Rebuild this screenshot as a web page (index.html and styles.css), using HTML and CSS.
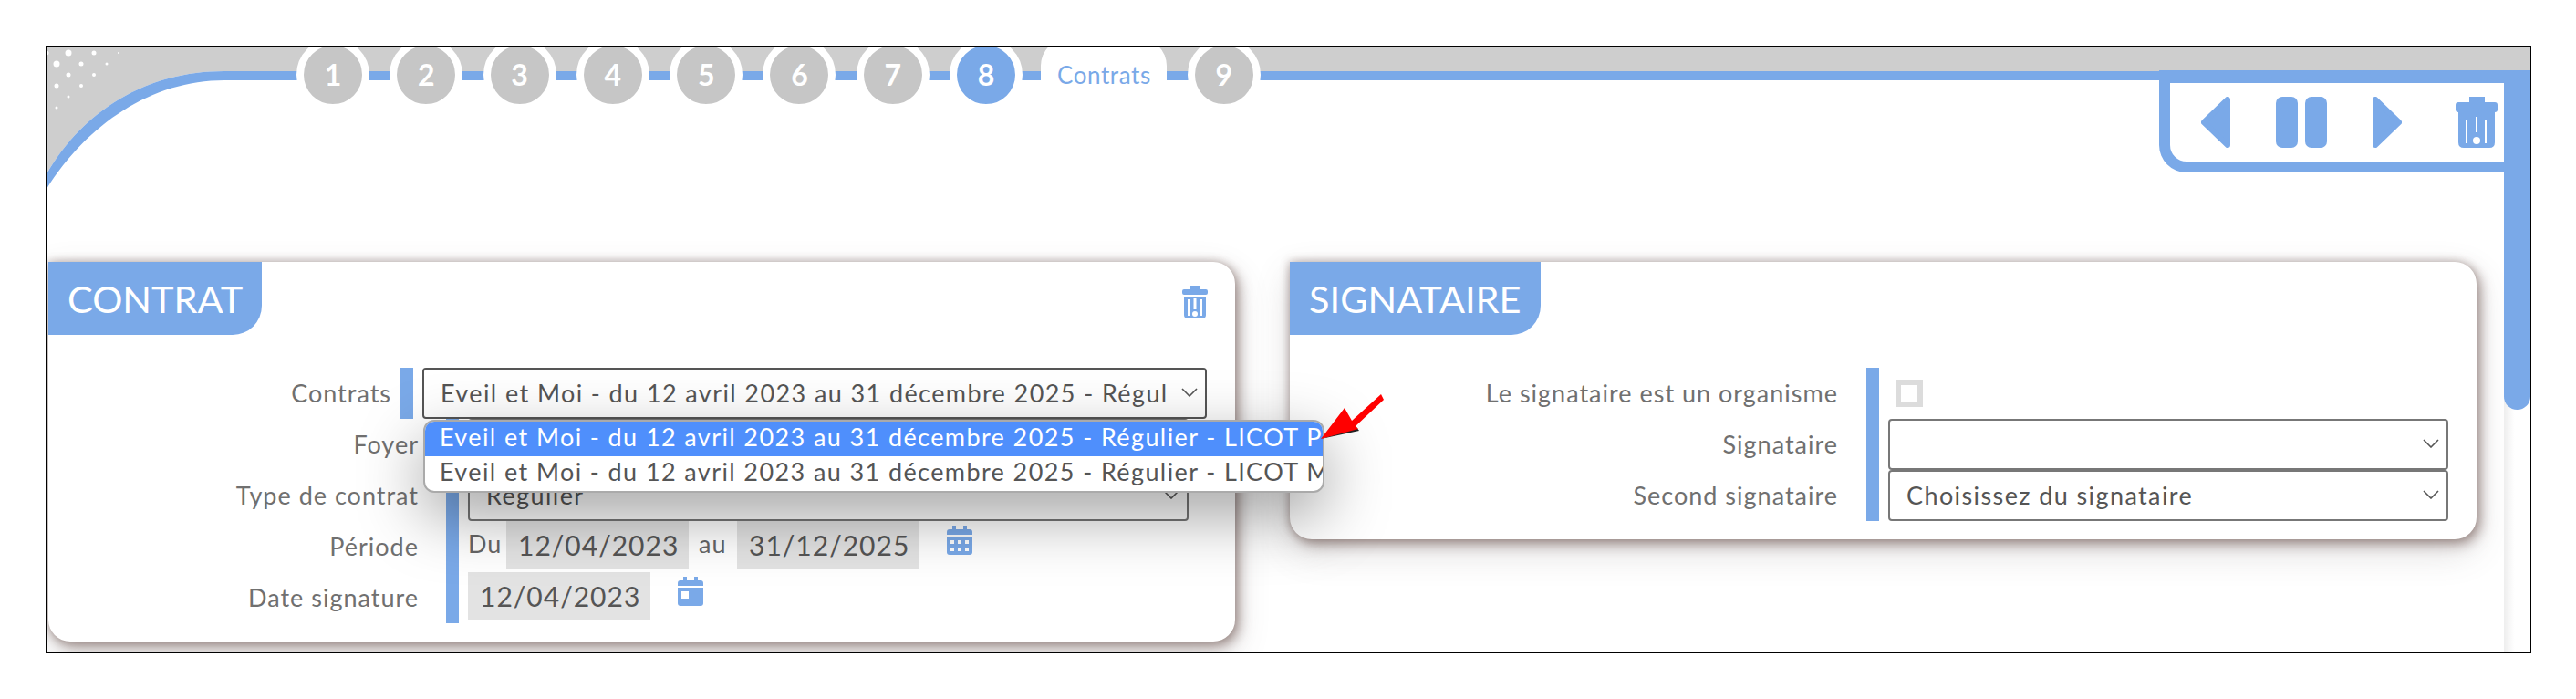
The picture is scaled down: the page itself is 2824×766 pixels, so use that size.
FILE: index.html
```html
<!DOCTYPE html>
<html lang="fr">
<head>
    <meta charset="UTF-8">
    <title>Contrats</title>
    <link rel="stylesheet" href="styles.css">
</head>
<body>
    <div class="frame">
        <div class="topbar">
            <svg class="corner" width="2726" height="170" viewBox="0 0 2726 170">
                <path fill="#cecece" d="M0 0H2726V27H195C110 27 40 70 0 140Z"/>
                <path fill="#7aa9e8" d="M0 140C40 70 110 27 195 27H2726V37H195C115 37 45 85 0 156Z"/>
                <g fill="#fff">
                    <circle cx="0" cy="7" r="2.5"/><circle cx="24" cy="7" r="3.5"/><circle cx="52" cy="7" r="2.5"/><circle cx="79" cy="7" r="1"/>
                    <circle cx="11" cy="19" r="3.5"/><circle cx="38" cy="19" r="2.5"/><circle cx="66" cy="19" r="1.5"/>
                    <circle cx="24" cy="31" r="2.5"/><circle cx="52" cy="31" r="2"/>
                    <circle cx="11" cy="43" r="2.5"/><circle cx="38" cy="43" r="2"/>
                    <circle cx="24" cy="55" r="1.5"/><circle cx="11" cy="67" r="1.5"/>
                </g>
            </svg>
            <div class="steps">
                <div class="step">1</div>
                <div class="step">2</div>
                <div class="step">3</div>
                <div class="step">4</div>
                <div class="step">5</div>
                <div class="step">6</div>
                <div class="step">7</div>
                <div class="step active">8</div>
                <div class="step-title">Contrats</div>
                <div class="step">9</div>
            </div>
            <div class="tools">
                <svg width="32" height="56" viewBox="0 0 32 56"><path fill="#7aa9e8" stroke="#7aa9e8" stroke-width="6" stroke-linejoin="round" d="M29 3V53L3 28Z"/></svg>
                <div class="pause"><span></span><span></span></div>
                <svg width="32" height="56" viewBox="0 0 32 56"><path fill="#7aa9e8" stroke="#7aa9e8" stroke-width="6" stroke-linejoin="round" d="M3 3V53L29 28Z"/></svg>
                <svg class="tool-trash" width="46" height="56" viewBox="0 0 46 56">
                    <path fill="#7aa9e8" d="M15 0H32V6H43Q46 6 46 9V14Q46 17 43 17V50Q43 56 37 56H9Q3 56 3 50V17Q0 17 0 14V9Q0 6 3 6H15Z"/>
                    <path fill="#fff" d="M11 25H13V51H11ZM32 25H34V51H32ZM22 22H24V39H22Z"/>
                    <circle cx="23" cy="48" r="4" fill="#fff"/>
                </svg>
            </div>
        </div>

        <div class="cards">
            <section class="card card-contrat">
                <h2 class="card-title">CONTRAT</h2>
                <svg class="card-trash" width="28" height="36" viewBox="0 0 28 36">
                    <path fill="#7aa9e8" d="M9 0H20V4H26Q28 4 28 6V8Q28 10 26 10H2Q0 10 0 8V6Q0 4 2 4H9Z"/>
                    <path fill="#7aa9e8" d="M2 12H26V32Q26 36 22 36H6Q2 36 2 32Z"/>
                    <path fill="#fff" d="M6 15H9V33H6ZM19 15H22V33H19ZM12.5 14H15.5V26H12.5Z"/>
                    <circle cx="14" cy="31" r="3" fill="#fff"/>
                </svg>
                <div class="form">
                    <div class="row row-first">
                        <div class="label">Contrats</div>
                        <div class="field">
                            <div class="select dark">
                                <span class="value">Eveil et Moi - du 12 avril 2023 au 31 décembre 2025 - Régul</span>
                                <svg class="chevron" width="18" height="10" viewBox="0 0 18 10"><path fill="none" stroke="#555" stroke-width="1.6" d="M1 1L9 9L17 1"/></svg>
                            </div>
                            <div class="dropdown">
                                <div class="option selected">Eveil et Moi - du 12 avril 2023 au 31 décembre 2025 - Régulier - LICOT P</div>
                                <div class="option">Eveil et Moi - du 12 avril 2023 au 31 décembre 2025 - Régulier - LICOT M</div>
                            </div>
                        </div>
                    </div>
                    <div class="row">
                        <div class="label">Foyer</div>
                        <div class="field"><div class="select"></div></div>
                    </div>
                    <div class="row">
                        <div class="label">Type de contrat</div>
                        <div class="field">
                            <div class="select">
                                <span class="value">Régulier</span>
                                <svg class="chevron" width="18" height="10" viewBox="0 0 18 10"><path fill="none" stroke="#555" stroke-width="1.6" d="M1 1L9 9L17 1"/></svg>
                            </div>
                        </div>
                    </div>
                    <div class="row">
                        <div class="label">Période</div>
                        <div class="field dates">
                            <span class="word">Du</span>
                            <div class="date">12/04/2023</div>
                            <span class="word">au</span>
                            <div class="date">31/12/2025</div>
                            <svg class="calendar" width="28" height="32" viewBox="0 0 28 32">
                                <path fill="#7aa9e8" d="M6 0H10V4H18V0H22V4H25Q28 4 28 7V10H0V7Q0 4 3 4H6Z"/>
                                <path fill="#7aa9e8" d="M0 12H28V29Q28 32 25 32H3Q0 32 0 29Z"/>
                                <path fill="#fff" d="M4 16H8V20H4ZM12 16H16V20H12ZM20 16H24V20H20ZM4 24H8V28H4ZM12 24H16V28H12ZM20 24H24V28H20Z"/>
                            </svg>
                        </div>
                    </div>
                    <div class="row">
                        <div class="label">Date signature</div>
                        <div class="field dates">
                            <div class="date">12/04/2023</div>
                            <svg class="calendar" width="28" height="32" viewBox="0 0 28 32">
                                <path fill="#7aa9e8" d="M6 0H10V4H18V0H22V4H25Q28 4 28 7V10H0V7Q0 4 3 4H6Z"/>
                                <path fill="#7aa9e8" d="M0 12H28V29Q28 32 25 32H3Q0 32 0 29Z"/>
                                <path fill="#fff" d="M4 16H12V24H4Z"/>
                            </svg>
                        </div>
                    </div>
                </div>
            </section>

            <section class="card card-signataire">
                <h2 class="card-title">SIGNATAIRE</h2>
                <div class="form">
                    <div class="row">
                        <div class="label">Le signataire est un organisme</div>
                        <div class="field"><span class="checkbox"></span></div>
                    </div>
                    <div class="row">
                        <div class="label">Signataire</div>
                        <div class="field">
                            <div class="select">
                                <svg class="chevron" width="18" height="10" viewBox="0 0 18 10"><path fill="none" stroke="#555" stroke-width="1.6" d="M1 1L9 9L17 1"/></svg>
                            </div>
                        </div>
                    </div>
                    <div class="row">
                        <div class="label">Second signataire</div>
                        <div class="field">
                            <div class="select">
                                <span class="value">Choisissez du signataire</span>
                                <svg class="chevron" width="18" height="10" viewBox="0 0 18 10"><path fill="none" stroke="#555" stroke-width="1.6" d="M1 1L9 9L17 1"/></svg>
                            </div>
                        </div>
                    </div>
                </div>
            </section>
        </div>

        <div class="scrollbar"><div class="thumb"></div></div>

        <svg class="arrow" width="80" height="60" viewBox="0 0 80 60">
            <path fill="#222" d="M8 56L50 47L47 43Z"/>
            <path fill="#f00" d="M8 56L34 22L42 36L74 7L77 13L46 42L49 45Z"/>
        </svg>
    </div>
</body>
</html>
```

FILE: styles.css
```css
body {
    margin: 0;
    padding: 50px;
    background: white;
    font-family: Lato, sans-serif;
    color: #666;
}
.frame {
    position: relative;
    width: 2723px;
    height: 664px;
    border: 1px solid black;
    overflow: hidden;
    background: white;
}
.topbar {
    position: relative;
    display: flex;
    align-items: flex-start;
    justify-content: space-between;
    height: 236px;
}
.corner {
    position: absolute;
    top: 0;
    left: 0;
}
.steps {
    position: relative;
    display: flex;
    gap: 22.3px;
    margin-left: 274px;
    margin-top: -9px;
}
.step {
    box-sizing: border-box;
    width: 80px;
    height: 80px;
    border: 8px solid white;
    border-radius: 50%;
    background: #c6c6c6;
    color: white;
    font-size: 32px;
    font-weight: 700;
    line-height: 64px;
    text-align: center;
}
.step.active {
    background: #7aa9e8;
}
.step-title {
    width: 138px;
    height: 48px;
    margin-left: -2px;
    padding-top: 24px;
    border-radius: 30px 30px 0 0;
    background: white;
    color: #7aa9e8;
    font-size: 26px;
    letter-spacing: 0.6px;
    text-align: center;
}
.tools {
    position: relative;
    box-sizing: border-box;
    display: flex;
    align-items: center;
    width: 407px;
    height: 112px;
    margin-top: 26px;
    padding-left: 34px;
    border: 12px solid #7aa9e8;
    border-right-width: 11px;
    border-top-width: 14px;
    border-radius: 0 0 0 30px;
    background: white;
}
.pause {
    display: flex;
    gap: 8px;
    margin-left: 50px;
    margin-right: 50px;
}
.pause span {
    width: 24px;
    height: 56px;
    border-radius: 7px;
    background: #7aa9e8;
}
.tool-trash {
    margin-left: 59px;
}
.cards {
    position: relative;
    display: flex;
    align-items: flex-start;
    gap: 60px;
    padding-left: 2px;
}
.card {
    position: relative;
    border-radius: 0 24px 24px 24px;
    background: white;
    box-shadow: 4px 5px 14px rgba(110, 85, 80, 0.6), -1px -1px 10px rgba(110, 85, 80, 0.3), 0 14px 38px rgba(90, 80, 80, 0.2);
}
.card-contrat {
    z-index: 2;
    width: 1301px;
    height: 416px;
}
.card-signataire {
    width: 1301px;
    height: 304px;
}
.card-title {
    display: flex;
    align-items: center;
    width: fit-content;
    height: 80px;
    margin: 0;
    padding: 0 21px;
    border-radius: 0 0 32px 0;
    background: #7aa9e8;
    color: white;
    font-size: 41.5px;
    font-weight: 400;
}
.card-trash {
    position: absolute;
    top: 26px;
    right: 30px;
}
.form {
    margin-top: 36px;
}
.row {
    display: flex;
    align-items: stretch;
    height: 56px;
    font-size: 27px;
    letter-spacing: 1.4px;
}
.label {
    width: 406px;
    margin-right: 30px;
    color: #707070;
    letter-spacing: 1px;
    line-height: 55px;
    text-align: right;
}
.row-first .label {
    width: 376px;
    margin-right: 10px;
}
.field {
    position: relative;
    display: flex;
    align-items: center;
    width: 790px;
    padding-left: 10px;
    border-left: 14px solid #7aa9e8;
}
.row-first .field {
    width: 860px;
}
.select {
    box-sizing: border-box;
    display: flex;
    align-items: center;
    justify-content: space-between;
    width: 100%;
    height: 56px;
    padding: 0 8px 2px 18px;
    border: 2px solid #777;
    border-radius: 4px;
    background: white;
    color: #555;
}
.select.dark {
    border-color: #555;
}
.value {
    white-space: nowrap;
}
.chevron {
    flex: none;
    margin-left: auto;
}
.dropdown {
    position: absolute;
    top: 57px;
    left: 11px;
    z-index: 3;
    box-sizing: border-box;
    width: 988px;
    height: 80px;
    overflow: hidden;
    border: 2px solid #aaa;
    border-radius: 12px;
    background: white;
    color: #555;
    box-shadow: 0 24px 70px rgba(0, 0, 0, 0.38);
}
.option {
    height: 38px;
    padding-left: 16px;
    line-height: 33px;
    white-space: nowrap;
}
.option.selected {
    background: #4f8ffc;
    color: white;
}
.dates {
    align-items: flex-start;
    gap: 11px;
}
.word {
    width: 31px;
    color: #666;
    letter-spacing: 1px;
    line-height: 50px;
}
.date {
    box-sizing: border-box;
    display: flex;
    align-items: center;
    width: 200px;
    height: 52px;
    padding-left: 13px;
    background: #e3e3e3;
    color: #555;
    font-size: 30px;
    letter-spacing: 1px;
}
.calendar {
    margin-top: 5px;
    margin-left: 19px;
}
.card-signataire .label {
    width: 601px;
    margin-right: 31px;
}
.card-signataire .field {
    width: 614px;
}
.checkbox {
    box-sizing: border-box;
    width: 30px;
    height: 30px;
    margin-left: 8px;
    border: 6px solid #dcdcdc;
}
.scrollbar {
    position: absolute;
    top: 37px;
    right: 0;
    bottom: 0;
    width: 29px;
    background: linear-gradient(to right, #eee, white 40%);
}
.thumb {
    height: 361px;
    border-radius: 0 0 15px 15px;
    background: #7aa9e8;
}
.arrow {
    position: absolute;
    top: 374px;
    left: 1389px;
    z-index: 5;
}
```
